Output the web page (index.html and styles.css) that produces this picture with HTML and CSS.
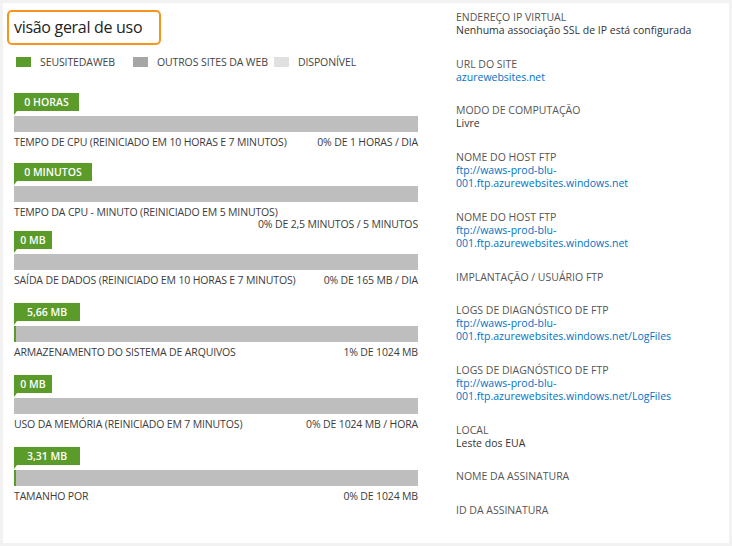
FILE: index.html
```html
<!DOCTYPE html>
<html lang="pt">
<head>
<meta charset="utf-8">
<title>visão geral de uso</title>
<link rel="stylesheet" href="styles.css">
</head>
<body>
<div class="page">
  <section class="usage">
    <h1 class="title">visão geral de uso</h1>
    <ul class="legend">
      <li><span class="swatch swatch-site"></span>SEUSITEDAWEB</li>
      <li><span class="swatch swatch-other"></span>OUTROS SITES DA WEB</li>
      <li><span class="swatch swatch-free"></span>DISPONÍVEL</li>
    </ul>

    <div class="meter meter-first">
      <div class="tag" style="width:65px">0 HORAS</div>
      <div class="bar"></div>
      <div class="caption"><span>TEMPO DE CPU (REINICIADO EM 10 HORAS E 7 MINUTOS)</span><span class="quota">0% DE 1 HORAS / DIA</span></div>
    </div>

    <div class="meter meter-wrap">
      <div class="tag" style="width:78px">0 MINUTOS</div>
      <div class="bar"></div>
      <div class="caption"><span>TEMPO DA CPU - MINUTO (REINICIADO EM 5 MINUTOS)</span><span class="quota">0% DE 2,5 MINUTOS / 5 MINUTOS</span></div>
    </div>

    <div class="meter">
      <div class="tag" style="width:38px">0 MB</div>
      <div class="bar"></div>
      <div class="caption"><span>SAÍDA DE DADOS (REINICIADO EM 10 HORAS E 7 MINUTOS)</span><span class="quota">0% DE 165 MB / DIA</span></div>
    </div>

    <div class="meter">
      <div class="tag" style="width:66px">5,66 MB</div>
      <div class="bar"><div class="fill" style="width:2px"></div></div>
      <div class="caption"><span>ARMAZENAMENTO DO SISTEMA DE ARQUIVOS</span><span class="quota">1% DE 1024 MB</span></div>
    </div>

    <div class="meter">
      <div class="tag" style="width:38px">0 MB</div>
      <div class="bar"></div>
      <div class="caption"><span>USO DA MEMÓRIA (REINICIADO EM 7 MINUTOS)</span><span class="quota">0% DE 1024 MB / HORA</span></div>
    </div>

    <div class="meter">
      <div class="tag" style="width:66px">3,31 MB</div>
      <div class="bar"><div class="fill" style="width:2px"></div></div>
      <div class="caption"><span>TAMANHO POR</span><span class="quota">0% DE 1024 MB</span></div>
    </div>
  </section>

  <aside class="props">
    <dl class="prop"><dt>ENDEREÇO IP VIRTUAL</dt><dd>Nenhuma associação SSL de IP está configurada</dd></dl>
    <dl class="prop"><dt>URL DO SITE</dt><dd><a href="#">azurewebsites.net</a></dd></dl>
    <dl class="prop"><dt>MODO DE COMPUTAÇÃO</dt><dd>Livre</dd></dl>
    <dl class="prop"><dt>NOME DO HOST FTP</dt><dd><a href="#">ftp://waws-prod-blu-<br>001.ftp.azurewebsites.windows.net</a></dd></dl>
    <dl class="prop"><dt>NOME DO HOST FTP</dt><dd><a href="#">ftp://waws-prod-blu-<br>001.ftp.azurewebsites.windows.net</a></dd></dl>
    <dl class="prop"><dt>IMPLANTAÇÃO / USUÁRIO FTP</dt></dl>
    <dl class="prop"><dt>LOGS DE DIAGNÓSTICO DE FTP</dt><dd><a href="#">ftp://waws-prod-blu-<br>001.ftp.azurewebsites.windows.net/LogFiles</a></dd></dl>
    <dl class="prop"><dt>LOGS DE DIAGNÓSTICO DE FTP</dt><dd><a href="#">ftp://waws-prod-blu-<br>001.ftp.azurewebsites.windows.net/LogFiles</a></dd></dl>
    <dl class="prop"><dt>LOCAL</dt><dd>Leste dos EUA</dd></dl>
    <dl class="prop"><dt>NOME DA ASSINATURA</dt></dl>
    <dl class="prop"><dt>ID DA ASSINATURA</dt></dl>
  </aside>
</div>
</body>
</html>
```
FILE: styles.css
```css
* { box-sizing: border-box; }

html, body {
  margin: 0;
  padding: 0;
}

body {
  background: #f2f2f2;
  padding: 3px;
  font-family: "Open Sans", "Noto Sans", sans-serif;
  font-size: 10.5px;
  color: #3b3b3b;
}

.page {
  width: 726px;
  height: 540px;
  background: #fff;
  display: flex;
  align-items: flex-start;
}

.usage {
  width: 404px;
  margin-left: 11px;
  padding-top: 7px;
}

.title {
  margin: 0 0 12px -7px;
  width: 154px;
  height: 35px;
  border: 2px solid #f7941e;
  border-radius: 5px;
  padding: 0 0 0 5px;
  font-size: 16px;
  letter-spacing: -0.3px;
  font-weight: 400;
  line-height: 30px;
  color: #222;
}

.legend {
  list-style: none;
  margin: 0 0 26px 0;
  padding: 0 0 0 2px;
  display: flex;
  height: 10px;
  align-items: center;
  color: #444;
  letter-spacing: -0.1px;
}

.legend li {
  display: flex;
  align-items: center;
  line-height: 10px;
}

.legend li:nth-child(1) { margin-right: 18px; }
.legend li:nth-child(2) { margin-right: 6px; }

.swatch {
  width: 15px;
  height: 10px;
  margin-right: 9px;
}

.swatch-site { background: #5b9b2a; }
.swatch-other { background: #a6a6a6; }
.swatch-free { background: #e0e0e0; }

.meter {
  margin-bottom: 17px;
}

.meter-first { margin-bottom: 15px; }
.meter-wrap { margin-bottom: 1px; }

.tag {
  position: relative;
  height: 18px;
  background: #5b9b2a;
  color: #fff;
  font-weight: 600;
  text-align: center;
  line-height: 18px;
  margin-bottom: 5px;
}

.tag::after {
  content: "";
  position: absolute;
  left: 0;
  top: 18px;
  border-left: 3px solid #5b9b2a;
  border-bottom: 4px solid transparent;
}

.bar {
  height: 16px;
  background: #bebebe;
}

.fill {
  height: 16px;
  background: #5b9b2a;
}

.caption {
  margin-top: 4px;
  display: flex;
  flex-wrap: wrap;
  justify-content: space-between;
  line-height: 12px;
  letter-spacing: -0.15px;
}

.quota {
  margin-left: auto;
}

.props {
  width: 250px;
  margin-left: 38px;
  padding-top: 8px;
}

.prop {
  margin: 0 0 20px 0;
  line-height: 13.3px;
}

.prop dt {
  color: #555;
}

.prop dd {
  margin: 0;
  color: #333;
}

.prop a {
  color: #0072c6;
  text-decoration: none;
}
```
